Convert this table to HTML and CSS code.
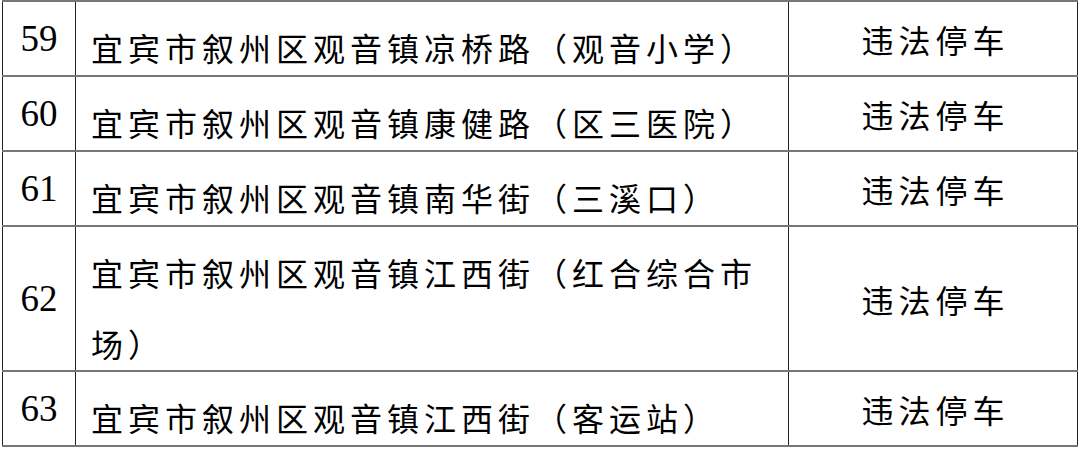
FILE: index.html
```html
<!DOCTYPE html>
<html lang="zh-CN">
<head>
<meta charset="utf-8">
<link rel="stylesheet" href="styles.css">
</head>
<body>
<table class="list">
  <colgroup>
    <col class="c-num">
    <col class="c-addr">
    <col class="c-type">
  </colgroup>
  <tbody>
    <tr class="row">
      <td class="num">59</td>
      <td class="addr"><div class="addr-text">宜宾市叙州区观音镇凉桥路（观音小学）</div></td>
      <td class="type">违法停车</td>
    </tr>
    <tr class="row">
      <td class="num">60</td>
      <td class="addr"><div class="addr-text">宜宾市叙州区观音镇康健路（区三医院）</div></td>
      <td class="type">违法停车</td>
    </tr>
    <tr class="row">
      <td class="num">61</td>
      <td class="addr"><div class="addr-text">宜宾市叙州区观音镇南华街（三溪口）</div></td>
      <td class="type">违法停车</td>
    </tr>
    <tr class="row row-tall">
      <td class="num">62</td>
      <td class="addr"><div class="addr-text">宜宾市叙州区观音镇江西街（红合综合市场）</div></td>
      <td class="type">违法停车</td>
    </tr>
    <tr class="row">
      <td class="num">63</td>
      <td class="addr"><div class="addr-text">宜宾市叙州区观音镇江西街（客运站）</div></td>
      <td class="type">违法停车</td>
    </tr>
  </tbody>
</table>
</body>
</html>
```

FILE: styles.css
```css
html, body {
  margin: 0;
  padding: 0;
  background: #ffffff;
}

body {
  padding: 0 0 0 2px;
}

.list {
  border-collapse: collapse;
  table-layout: fixed;
  width: 1075px;
  color: #000;
  font-family: "Noto Sans CJK SC", "Liberation Serif", serif;
}

.c-num { width: 73px; }
.c-addr { width: 713px; }
.c-type { width: 289px; }

.list td {
  border-left: 1px solid #222;
  border-right: 1px solid #222;
  border-top: 2px solid #777;
  border-bottom: 2px solid #777;
  padding: 0;
  vertical-align: middle;
}

.row { height: 75px; }
.row-tall { height: 145px; }

.num {
  text-align: center;
  font-family: "Liberation Serif", serif;
  font-size: 37px;
}

.addr {
  padding: 0 12px 0 15px !important;
  vertical-align: top !important;
  font-size: 32px;
  letter-spacing: 5px;
}

.addr-text {
  line-height: 71px;
  padding-top: 10px;
  margin-bottom: -10px;
}

.type {
  text-align: center;
  font-size: 32px;
  letter-spacing: 5px;
  text-indent: 5px;
}
```
